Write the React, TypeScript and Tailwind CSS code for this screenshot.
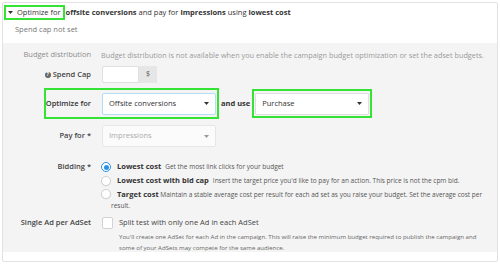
import React from "react";

// small solid down-pointing triangle used in selects and header
function Caret({ className = "" }: { className?: string }) {
  return (
    <svg width="5" height="3" viewBox="0 0 5 3" className={className}>
      <path d="M0 0h5L2.5 3z" fill="currentColor" />
    </svg>
  );
}

function Select({ value, disabled = false, focused = false }: { value: string; disabled?: boolean; focused?: boolean }) {
  return (
    <div
      className={`w-[114px] h-[22px] flex items-center justify-between pl-[6px] pr-[6px] rounded-[2px] border text-[7.5px] ${
        focused ? "border-[#b4def5] bg-white" : disabled ? "border-[#e6e6e6] bg-[#fbfbfb]" : "border-[#dedede] bg-white"
      } ${disabled ? "text-[#aaa]" : "text-[#333]"}`}
    >
      <span>{value}</span>
      <Caret className={disabled ? "text-[#999]" : "text-[#333]"} />
    </div>
  );
}

function Radio({ checked = false }: { checked?: boolean }) {
  return checked ? (
    <span className="w-[10px] h-[10px] rounded-full border border-[#2a92e8] bg-white flex items-center justify-center shrink-0">
      <span className="w-[5px] h-[5px] rounded-full bg-[#2a92e8]" />
    </span>
  ) : (
    <span className="w-[10px] h-[10px] rounded-full border border-[#d2d2d2] bg-white shrink-0 shadow-[0_0.5px_1px_rgba(0,0,0,0.08)]" />
  );
}

export default function App() {
  return (
    <div className="w-[500px] h-[264px] bg-white p-[2px] font-['Open_Sans',sans-serif] text-[#333]">
      <div className="h-full border border-[#e2e2e2] rounded-[2px] flex flex-col">
        {/* Header */}
        <div className="h-[40px] pt-[2px]">
          <div className="flex items-center text-[7.5px] leading-none ml-[1px] whitespace-nowrap">
            <span className="h-[15px] border-2 border-[#35e335] flex items-center pl-[2px] pr-[2px]">
              <Caret className="text-[#333]" />
              <span className="ml-[4px]">Optimize for</span>
            </span>
            <span className="font-bold ml-[1px]">offsite conversions</span>
            <span className="ml-[2px]">and pay for</span>
            <span className="font-bold ml-[2px]">impressions</span>
            <span className="ml-[2px]">using</span>
            <span className="font-bold ml-[2px]">lowest cost</span>
          </div>
          <div className="ml-[12px] mt-[4px] text-[7.5px] leading-[10px] text-[#777]">Spend cap not set</div>
        </div>

        {/* Settings panel */}
        <div className="h-[209px] bg-[#f4f4f4] pt-[6px] text-[7.5px]">
          {/* Budget distribution */}
          <div className="flex items-center h-[12px] gap-[10px] whitespace-nowrap">
            <div className="w-[88px] text-right text-[#8c8c8c]">Budget distribution</div>
            <div className="text-[7.3px] text-[#9a9a9a]">
              Budget distribution is not available when you enable the campaign budget optimization or set the adset budgets.
            </div>
          </div>

          {/* Spend cap */}
          <div className="flex items-center h-[17px] mt-[5px] gap-[10px]">
            <div className="w-[88px] flex items-center justify-end gap-[2px] font-semibold text-[#444]">
              <span className="w-[6px] h-[6px] rounded-full bg-[#666] text-white text-[5px] leading-none font-bold flex items-center justify-center">
                ?
              </span>
              <span>Spend Cap</span>
            </div>
            <div className="flex h-[17px] ml-[1px]">
              <div className="w-[37px] h-full bg-white border border-[#e0e0e0] rounded-l-[2px]" />
              <div className="w-[18px] h-full bg-[#e6e6e6] flex items-center justify-center text-[#555] text-[7px]">$</div>
            </div>
          </div>

          {/* Optimize for */}
          <div className="flex items-center h-[31px] mt-[5px] whitespace-nowrap">
            <div className="w-[41px]" />
            <div className="h-[31px] border-2 border-[#35e335] flex items-center pr-[1px]">
              <div className="w-[45px] flex justify-end font-semibold text-[#333]">
                <span>Optimize for</span>
              </div>
              <div className="ml-[11px]">
                <Select value="Offsite conversions" focused />
              </div>
            </div>
            <span className="ml-[2px] font-bold text-[#333]">and use</span>
            <div className="ml-[2px] h-[29px] border-2 border-[#35e335] flex items-center px-[1px]">
              <Select value="Purchase" />
            </div>
          </div>

          {/* Pay for */}
          <div className="flex items-center h-[22px] mt-[6px] gap-[10px]">
            <div className="w-[88px] text-right font-semibold text-[#444]">Pay for *</div>
            <div className="ml-[1px]">
              <Select value="Impressions" disabled />
            </div>
          </div>

          {/* Bidding */}
          <div className="flex mt-[13px] gap-[10px]">
            <div className="w-[88px] h-[14px] flex items-center justify-end font-semibold text-[#444]">Bidding *</div>
            <div className="w-[390px]">
              <div className="h-[14px] flex items-center whitespace-nowrap">
                <Radio checked />
                <span className="ml-[6px] font-bold text-[#333]">Lowest cost</span>
                <span className="ml-[4px] text-[6.5px] text-[#555]">Get the most link clicks for your budget</span>
              </div>
              <div className="h-[14px] flex items-center whitespace-nowrap">
                <Radio />
                <span className="ml-[6px] font-bold text-[#333]">Lowest cost with bid cap</span>
                <span className="ml-[4px] text-[6.5px] text-[#555]">
                  Insert the target price you'd like to pay for an action. This price is not the cpm bid.
                </span>
              </div>
              <div className="flex">
                <div className="h-[12px] flex items-center">
                  <Radio />
                </div>
                <p className="leading-[11.5px] indent-[6px] pt-[0.5px] text-[6.5px] text-[#555]">
                  <span className="text-[7.5px] font-bold text-[#333]">Target cost</span>{" "}
                  Maintain a stable average cost per result for each ad set as you raise your budget. Set the average cost per
                  result.
                </p>
              </div>
            </div>
          </div>

          {/* Single ad per adset */}
          <div className="flex mt-[5px] gap-[10px]">
            <div className="w-[88px] h-[12px] flex items-center justify-end font-semibold text-[#444] whitespace-nowrap">
              Single Ad per AdSet
            </div>
            <div className="ml-[1px]">
              <div className="h-[12px] flex items-center">
                <span className="w-[11px] h-[12px] bg-white border border-[#d2d2d2] rounded-[2px]" />
                <span className="ml-[6px] text-[#444]">Split test with only one Ad in each AdSet</span>
              </div>
              <p className="ml-[17px] text-[6.1px] leading-[11px] text-[#666] mt-[2px] whitespace-nowrap">
                You'll create one AdSet for each Ad in the campaign. This will raise the minimum budget required to publish the campaign and
                <br />
                some of your AdSets may compete for the same audience.
              </p>
            </div>
          </div>
        </div>
      </div>
    </div>
  );
}
